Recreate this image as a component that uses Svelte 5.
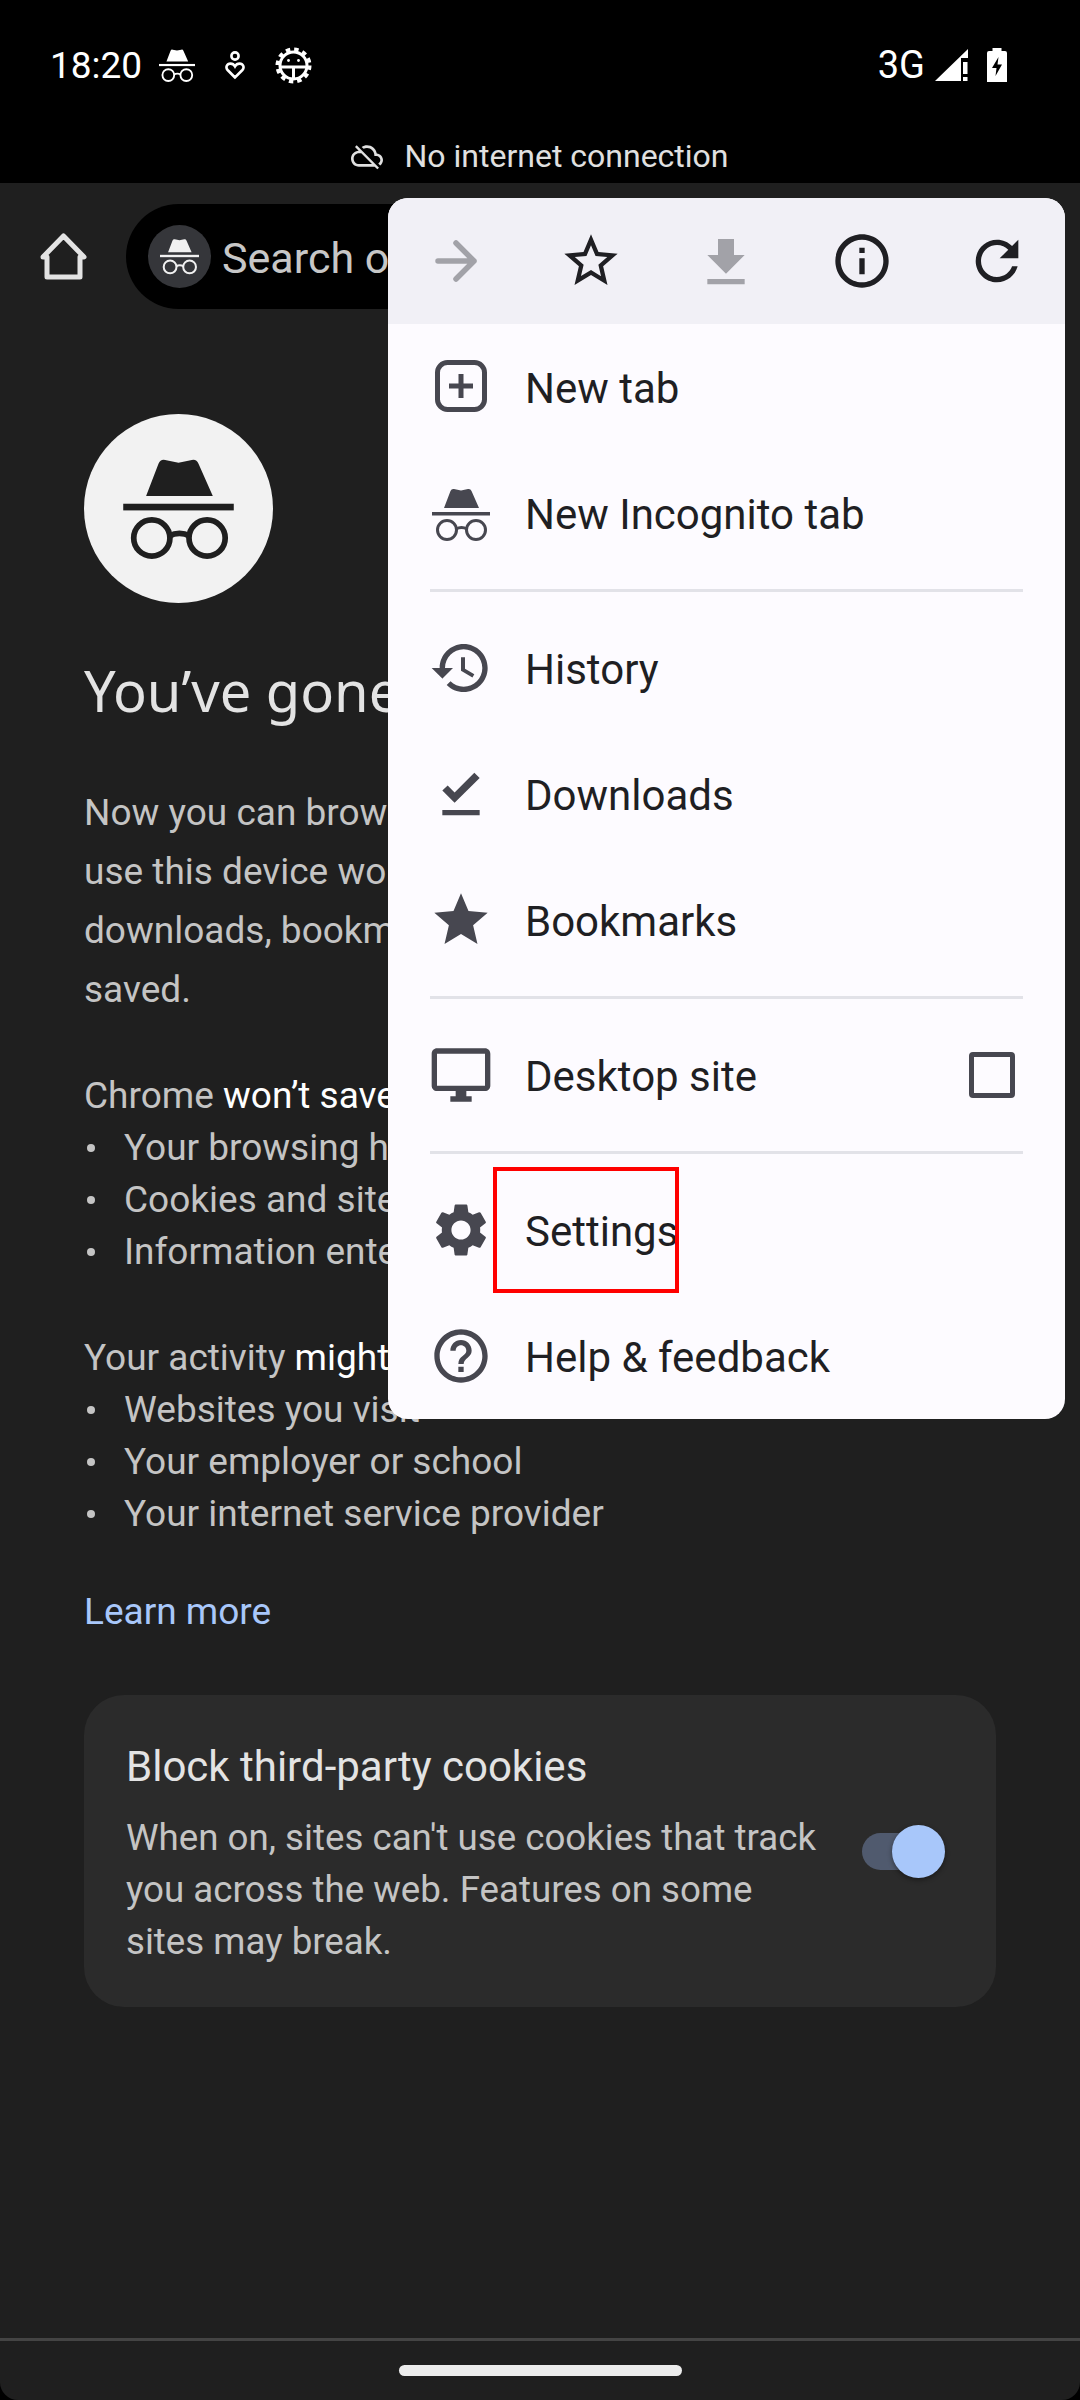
{#snippet incognito(cls)}
  <svg class={cls} viewBox="0 0 58 53" fill="currentColor">
    <path d="M12 20 L18.5 3 Q19.5 .5 22 1 L29 2.5 L36 1 Q38.5 .5 39.5 3 L47 20 Z" />
    <rect x="0" y="24" width="58" height="3.5" />
    <g fill="none" stroke="currentColor" stroke-width="3">
      <circle cx="15" cy="42" r="9.5" />
      <circle cx="44" cy="42" r="9.5" />
      <path d="M24 41 Q29.5 38 35 41" />
    </g>
  </svg>
{/snippet}

{#snippet icon(d, cls)}
  <svg class={cls} viewBox="0 0 24 24" fill="currentColor"><path {d} /></svg>
{/snippet}

<div class="phone">
  <header class="status">
    <div class="status-row">
      <span class="time">18:20</span>
      {@render incognito('st-inc')}
      <svg class="st-heart" viewBox="0 0 20 29" fill="none" stroke="currentColor" stroke-width="2.6">
        <circle cx="10" cy="5" r="3.6" />
        <path d="M10 26.5 L2.6 19 C.2 16.4 2 12.6 5.4 12.6 C7.4 12.6 9 13.6 10 15.4 C11 13.6 12.6 12.6 14.6 12.6 C18 12.6 19.8 16.4 17.4 19 Z" />
      </svg>
      <svg class="st-gear" viewBox="0 0 37 37" fill="none" stroke="currentColor">
        <circle cx="18.5" cy="18.5" r="13.5" stroke-width="3" />
        <circle cx="18.5" cy="18.5" r="16" stroke-width="4" stroke-dasharray="4.4 4" />
        <path d="M6 20 H31 M18.5 20 V31" stroke-width="3" />
        <circle cx="13.5" cy="13.5" r="1.4" fill="currentColor" stroke="none" />
        <circle cx="23.5" cy="13.5" r="1.4" fill="currentColor" stroke="none" />
      </svg>
      <span class="net">3G</span>
      <svg class="st-signal" viewBox="0 0 33 33" fill="currentColor">
        <path d="M0 32 L33 0 V9 H26 V32 Z" />
        <rect x="28" y="13" width="4.5" height="12" />
        <rect x="28" y="28" width="4.5" height="4" />
      </svg>
      <svg class="st-batt" viewBox="0 0 20 34" fill="currentColor">
        <path fill-rule="evenodd" d="M5.5 0 H14.5 V3 H18 Q20 3 20 5 V34 H0 V5 Q0 3 2 3 H5.5 Z M11.5 9 L5 20 H9.5 L8.5 28 L15 16.5 H10.5 Z" />
      </svg>
    </div>
    <div class="notice">
      {@render icon('M19.35 10.04C18.67 6.59 15.64 4 12 4c-1.48 0-2.85.43-4.01 1.17l1.46 1.46C10.21 6.23 11.08 6 12 6c3.04 0 5.5 2.46 5.5 5.5v.5H19c1.66 0 3 1.34 3 3 0 1.13-.64 2.11-1.56 2.62l1.45 1.45C23.16 18.16 24 16.68 24 15c0-2.64-2.05-4.78-4.65-4.96zM3 5.27l2.75 2.74C2.56 8.15 0 10.77 0 14c0 3.31 2.69 6 6 6h11.73l2 2L21 20.73 4.27 4 3 5.27zM7.73 10l8 8H6c-2.21 0-4-1.79-4-4s1.79-4 4-4h1.73z', 'cloud')}
      <span>No internet connection</span>
    </div>
  </header>

  <div class="screen">
    <div class="toolbar">
      <svg class="home" viewBox="0 0 47 47" fill="none" stroke="currentColor" stroke-width="5" stroke-linejoin="round">
        <path d="M3 24 L23.5 3 L44 24 H40 V44 H7 V24 Z" />
      </svg>
      <div class="omnibox">
        <div class="badge">{@render incognito('badge-inc')}</div>
        <span class="omni-text">Search or type web address</span>
      </div>
    </div>

    <main class="ntp">
      <div class="avatar">{@render incognito('avatar-inc')}</div>
      <h1>You’ve gone Incognito</h1>
      <p class="intro">Now you can browse privately, and other people who use this device won’t see your activity. However, downloads, bookmarks and reading list items will be saved.</p>
      <p class="lead first">Chrome <b>won’t save</b> the following information:</p>
      <ul>
        <li>Your browsing history</li>
        <li>Cookies and site data</li>
        <li>Information entered in forms</li>
      </ul>
      <p class="lead second">Your activity <b>might still be visible</b> to:</p>
      <ul>
        <li>Websites you visit</li>
        <li>Your employer or school</li>
        <li>Your internet service provider</li>
      </ul>
      <div class="learn">Learn more</div>
      <section class="card">
        <div class="card-text">
          <div class="card-title">Block third-party cookies</div>
          <div class="card-desc">When on, sites can't use cookies that track you across the web. Features on some sites may break.</div>
        </div>
        <div class="toggle"><span class="thumb"></span></div>
      </section>
    </main>

    <footer class="navbar"><span class="pill"></span></footer>
  </div>

  <nav class="menu">
    <div class="menu-top">
      <svg class="ti dim" viewBox="0 0 64 64" fill="none" stroke="currentColor" stroke-width="5.5" stroke-linecap="round" stroke-linejoin="round"><path d="M14 32 H50 M32 14 L50 32 L32 50" /></svg>
      {@render icon('M22 9.24l-7.19-.62L12 2 9.19 8.63 2 9.24l5.46 4.73L5.82 21 12 17.27 18.18 21l-1.63-7.03L22 9.24zM12 15.4l-3.76 2.27 1-4.28-3.32-2.88 4.38-.38L12 6.1l1.71 4.04 4.38.38-3.32 2.88 1 4.28L12 15.4z', 'ti')}
      {@render icon('M19 9h-4V3H9v6H5l7 7 7-7zM5 18v2h14v-2H5z', 'ti dim dl')}
      {@render icon('M11 7h2v2h-2zm0 4h2v6h-2zm1-9C6.48 2 2 6.48 2 12s4.48 10 10 10 10-4.48 10-10S17.52 2 12 2zm0 18c-4.41 0-8-3.59-8-8s3.59-8 8-8 8 3.59 8 8-3.59 8-8 8z', 'ti')}
      {@render icon('M17.65 6.35C16.2 4.9 14.21 4 12 4c-4.42 0-7.99 3.58-7.99 8s3.57 8 7.99 8c3.73 0 6.84-2.55 7.73-6h-2.08c-.82 2.33-3.04 4-5.65 4-3.31 0-6-2.69-6-6s2.69-6 6-6c1.66 0 3.14.69 4.22 1.78L13 11h7V4l-2.35 2.35z', 'ti')}
    </div>

    <div class="row">
      <svg class="mi" viewBox="0 0 64 64" fill="none" stroke="currentColor"><rect x="8.5" y="7.5" width="47" height="47" rx="10" stroke-width="5" /><path d="M32 19 V43 M20 31 H44" stroke-width="5" /></svg>
      <span>New tab</span>
    </div>
    <div class="row">
      <span class="mi slot">{@render incognito('menu-inc')}</span>
      <span>New Incognito tab</span>
    </div>
    <div class="sep"></div>
    <div class="row">
      {@render icon('M13 3c-4.97 0-9 4.03-9 9H1l3.89 3.89.07.14L9 12H6c0-3.87 3.13-7 7-7s7 3.13 7 7-3.13 7-7 7c-1.93 0-3.68-.79-4.94-2.06l-1.42 1.42C8.27 19.99 10.51 21 13 21c4.97 0 9-4.03 9-9s-4.03-9-9-9zm-1 5v5l4.28 2.54.72-1.21-3.5-2.08V8H12z', 'mi')}
      <span>History</span>
    </div>
    <div class="row">
      {@render icon('M5 18h14v2H5v-2zm4.6-2.7L5 10.7l2-1.9 2.6 2.6L17 4l2 2-9.4 9.3z', 'mi')}
      <span>Downloads</span>
    </div>
    <div class="row">
      {@render icon('M12 17.27L18.18 21l-1.64-7.03L22 9.24l-7.19-.61L12 2 9.19 8.63 2 9.24l5.46 4.73L5.82 21z', 'mi')}
      <span>Bookmarks</span>
    </div>
    <div class="sep"></div>
    <div class="row">
      {@render icon('M21 2H3c-1.1 0-2 .9-2 2v12c0 1.1.9 2 2 2h7v2H8v2h8v-2h-2v-2h7c1.1 0 2-.9 2-2V4c0-1.1-.9-2-2-2zm0 14H3V4h18v12z', 'mi')}
      <span>Desktop site</span>
      <span class="check"></span>
    </div>
    <div class="sep"></div>
    <div class="row highlighted">
      {@render icon('M19.14 12.94c.04-.3.06-.61.06-.94 0-.32-.02-.64-.07-.94l2.03-1.58c.18-.14.23-.41.12-.61l-1.92-3.32c-.12-.22-.37-.29-.59-.22l-2.39.96c-.5-.38-1.03-.7-1.62-.94l-.36-2.54c-.04-.24-.24-.41-.48-.41h-3.84c-.24 0-.43.17-.47.41l-.36 2.54c-.59.24-1.13.57-1.62.94l-2.39-.96c-.22-.08-.47 0-.59.22L2.74 8.87c-.12.21-.08.47.12.61l2.03 1.58c-.05.3-.09.63-.09.94s.02.64.07.94l-2.03 1.58c-.18.14-.23.41-.12.61l1.92 3.32c.12.22.37.29.59.22l2.39-.96c.5.38 1.03.7 1.62.94l.36 2.54c.05.24.24.41.48.41h3.84c.24 0 .44-.17.47-.41l.36-2.54c.59-.24 1.13-.56 1.62-.94l2.39.96c.22.08.47 0 .59-.22l1.92-3.32c.12-.22.07-.47-.12-.61l-2.01-1.58zM12 15.6c-1.98 0-3.6-1.62-3.6-3.6s1.62-3.6 3.6-3.6 3.6 1.62 3.6 3.6-1.62 3.6-3.6 3.6z', 'mi')}
      <span>Settings</span>
      <span class="redbox"></span>
    </div>
    <div class="row">
      {@render icon('M11 18h2v-2h-2v2zm1-16C6.48 2 2 6.48 2 12s4.48 10 10 10 10-4.48 10-10S17.52 2 12 2zm0 18c-4.41 0-8-3.59-8-8s3.59-8 8-8 8 3.59 8 8-3.59 8-8 8zm0-14c-2.21 0-4 1.79-4 4h2c0-1.1.9-2 2-2s2 .9 2 2c0 2-3 1.75-3 5h2c0-2.25 3-2.5 3-5 0-2.21-1.79-4-4-4z', 'mi')}
      <span>Help &amp; feedback</span>
    </div>
  </nav>
</div>

<style>
  :global(body) { margin: 0; background: #000; }
  .phone {
    position: relative;
    width: 1080px;
    height: 2400px;
    background: #000;
    overflow: hidden;
    display: flex;
    flex-direction: column;
    font-family: Roboto, "Liberation Sans", sans-serif;
  }
  .status { height: 183px; display: flex; flex-direction: column; color: #fff; flex: none; }
  .status-row { height: 130px; display: flex; align-items: center; padding: 0 73px 0 50px; box-sizing: border-box; }
  .time { font-size: 37px; width: 109px; }
  :global(.st-inc) { width: 36px; height: 33px; margin-right: 30px; }
  .st-heart { width: 20px; height: 29px; margin-right: 30px; }
  .st-gear { width: 37px; height: 37px; }
  .net { font-size: 38px; margin-left: auto; margin-right: 10px; }
  .st-signal { width: 33px; height: 33px; margin-right: 19px; }
  .st-batt { width: 20px; height: 34px; }
  .notice { flex: 1; display: flex; align-items: center; justify-content: center; gap: 21px; color: #e0e0e0; font-size: 32px; padding-bottom: 1px; }
  :global(.cloud) { width: 32px; height: 32px; }

  .screen {
    flex: 1;
    background: #1f1f1f;
    border-radius: 0 0 18px 18px;
    display: flex;
    flex-direction: column;
    min-height: 0;
  }
  .toolbar { height: 147px; flex: none; box-sizing: border-box; padding: 21px 0 0 40px; display: flex; align-items: flex-start; }
  .home { width: 47px; height: 47px; margin: 29px 39px 0 0; color: #e3e3e3; }
  .omnibox { height: 105px; flex: 1; margin-right: 40px; background: #000; border-radius: 53px; display: flex; align-items: center; padding-left: 22px; }
  .badge { width: 63px; height: 63px; border-radius: 50%; background: #35363a; display: flex; align-items: center; justify-content: center; color: #f1f1f1; margin-right: 11px; }
  :global(.badge-inc) { width: 39px; height: 37px; }
  .omni-text { font-size: 43px; color: #c7c7c7; padding-top: 2px; }

  .ntp { flex: 1; padding: 84px 84px 0; color: #c4c4c4; font-size: 37px; min-height: 0; }
  .avatar { width: 189px; height: 189px; border-radius: 50%; background: #f2f2f2; color: #1f1f1f; display: flex; align-items: center; justify-content: center; }
  :global(.avatar-inc) { width: 111px; height: 101px; }
  h1 { margin: 52px 0 0; font-size: 56px; line-height: 70px; font-weight: 400; color: #e3e3e3; font-family: "Noto Sans", Roboto, sans-serif; white-space: nowrap; }
  .intro { margin: 58px 0 0; line-height: 59px; }
  .lead { margin: 0; line-height: 52px; }
  .first { margin-top: 51px; }
  .second { margin-top: 54px; }
  b { font-weight: 400; color: #fff; }
  ul { margin: 0; padding: 0; list-style: none; line-height: 52px; }
  li { display: flex; align-items: center; }
  li::before { content: ""; flex: none; width: 8px; height: 8px; border-radius: 50%; background: #c4c4c4; margin: 0 29px 0 3px; }
  .learn { margin-top: 46px; line-height: 52px; color: #a8c7fa; }
  .card { margin-top: 57px; height: 312px; box-sizing: border-box; background: #2b2b2b; border-radius: 40px; display: flex; align-items: center; padding: 0 61px 0 42px; }
  .card-text { width: 710px; padding-top: 7px; }
  .card-title { font-size: 42px; line-height: 52px; color: #e3e3e3; margin-bottom: 19px; }
  .card-desc { font-size: 36.7px; line-height: 52px; }
  .toggle { position: relative; width: 73px; height: 37px; margin-left: auto; border-radius: 19px; background: #505a6e; flex: none; }
  .thumb { position: absolute; left: 30px; top: -8px; width: 53px; height: 53px; border-radius: 50%; background: #a8c7fa; box-shadow: 0 2px 5px rgba(0,0,0,.4); }

  .navbar { height: 62px; flex: none; border-top: 3px solid #444; box-sizing: border-box; display: flex; justify-content: center; padding-top: 24px; }
  .pill { width: 283px; height: 11px; border-radius: 6px; background: #ececec; }

  .menu {
    position: absolute;
    left: 388px;
    top: 198px;
    width: 677px;
    height: 1221px;
    border-radius: 20px;
    background: #fdfbff;
    overflow: hidden;
    color: #1f1f23;
    font-size: 42px;
  }
  .menu-top { height: 126px; background: #f1f0f6; display: grid; grid-template-columns: repeat(5, 1fr); justify-items: center; align-items: center; color: #1f1f23; }
  :global(.ti) { width: 64px; height: 64px; }
  :global(.ti.dim) { color: #a2a2a8; }
  :global(.ti.dl) { margin-top: 3px; }
  .row { position: relative; height: 126px; display: flex; align-items: center; padding-left: 41px; }
  .row > span { padding-top: 2px; }
  :global(.mi) { width: 64px; height: 64px; color: #474750; margin-right: 32px; flex: none; }
  .slot { display: flex; align-items: center; justify-content: center; }
  :global(.menu-inc) { width: 58px; height: 53px; flex: none; }
  .sep { height: 3px; margin: 13px 42px; background: #e2e2e8; }
  .check { width: 46px; height: 46px; box-sizing: border-box; border: 5px solid #474750; border-radius: 4px; margin-left: auto; margin-right: 50px; }
  .redbox { position: absolute; left: 105px; top: 0; width: 186px; height: 126px; box-sizing: border-box; border: 4px solid #f00; }
</style>
